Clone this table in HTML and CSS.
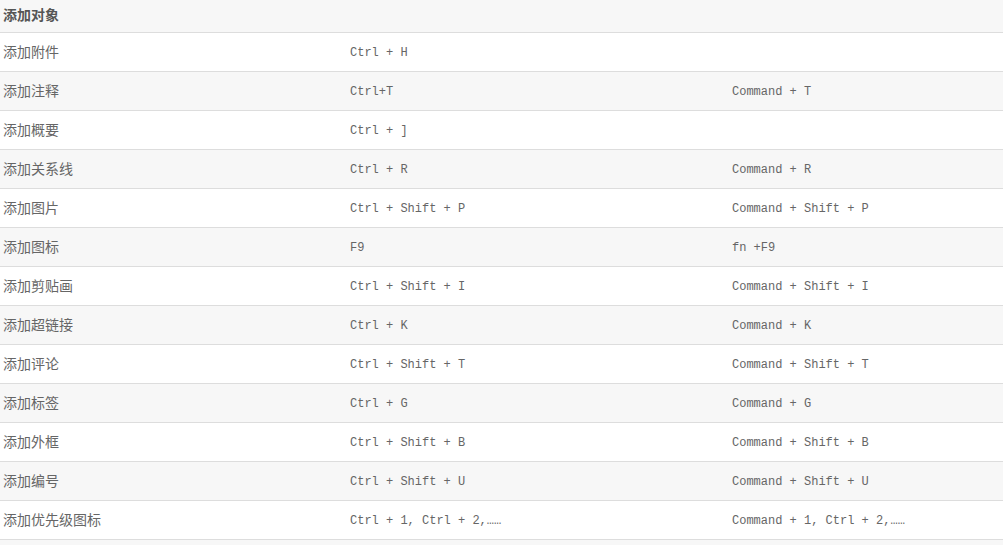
FILE: index.html
```html
<!DOCTYPE html>
<html lang="zh">
<head>
<meta charset="utf-8">
<link rel="stylesheet" href="styles.css">
</head>
<body>
<div class="table">
  <div class="row head"><div class="c1">添加对象</div><div class="c2"></div><div class="c3"></div></div>
  <div class="row"><div class="c1">添加附件</div><div class="c2">Ctrl + H</div><div class="c3"></div></div>
  <div class="row alt"><div class="c1">添加注释</div><div class="c2">Ctrl+T</div><div class="c3">Command + T</div></div>
  <div class="row"><div class="c1">添加概要</div><div class="c2">Ctrl + ]</div><div class="c3"></div></div>
  <div class="row alt"><div class="c1">添加关系线</div><div class="c2">Ctrl + R</div><div class="c3">Command + R</div></div>
  <div class="row"><div class="c1">添加图片</div><div class="c2">Ctrl + Shift + P</div><div class="c3">Command + Shift + P</div></div>
  <div class="row alt"><div class="c1">添加图标</div><div class="c2">F9</div><div class="c3">fn +F9</div></div>
  <div class="row"><div class="c1">添加剪贴画</div><div class="c2">Ctrl + Shift + I</div><div class="c3">Command + Shift + I</div></div>
  <div class="row alt"><div class="c1">添加超链接</div><div class="c2">Ctrl + K</div><div class="c3">Command + K</div></div>
  <div class="row"><div class="c1">添加评论</div><div class="c2">Ctrl + Shift + T</div><div class="c3">Command + Shift + T</div></div>
  <div class="row alt"><div class="c1">添加标签</div><div class="c2">Ctrl + G</div><div class="c3">Command + G</div></div>
  <div class="row"><div class="c1">添加外框</div><div class="c2">Ctrl + Shift + B</div><div class="c3">Command + Shift + B</div></div>
  <div class="row alt"><div class="c1">添加编号</div><div class="c2">Ctrl + Shift + U</div><div class="c3">Command + Shift + U</div></div>
  <div class="row"><div class="c1">添加优先级图标</div><div class="c2">Ctrl + 1, Ctrl + 2,……</div><div class="c3">Command + 1, Ctrl + 2,……</div></div>
  <div class="row alt tail"></div>
</div>
</body>
</html>
```
FILE: styles.css
```css
html, body {
  margin: 0;
  padding: 0;
  background: #ffffff;
}
.table {
  width: 1003px;
  display: flex;
  flex-direction: column;
}
.row {
  display: grid;
  grid-template-columns: 347px 382px 1fr;
  height: 38px;
  align-items: center;
  border-bottom: 1px solid #dddddd;
  background: #ffffff;
  color: #666666;
}
.row.alt {
  background: #f7f7f7;
}
.row.tail {
  height: 5px;
  border-bottom: none;
}
.row.head {
  height: 32px;
  background: #f7f7f7;
  border-bottom: 1px solid #dddddd;
}
.row.head .c1 {
  font-weight: bold;
  color: #555555;
  padding-bottom: 4px;
}
.c1 {
  padding-left: 3px;
  padding-bottom: 3px;
  font-family: "Noto Sans CJK SC", "Noto Sans", sans-serif;
  font-size: 14px;
  line-height: 16px;
  white-space: nowrap;
}
.c2, .c3 {
  padding-left: 3px;
  padding-top: 2px;
  font-family: "Liberation Mono", "Noto Sans CJK SC", monospace;
  font-size: 12px;
  line-height: 16px;
  white-space: nowrap;
  color: #666666;
}
```
